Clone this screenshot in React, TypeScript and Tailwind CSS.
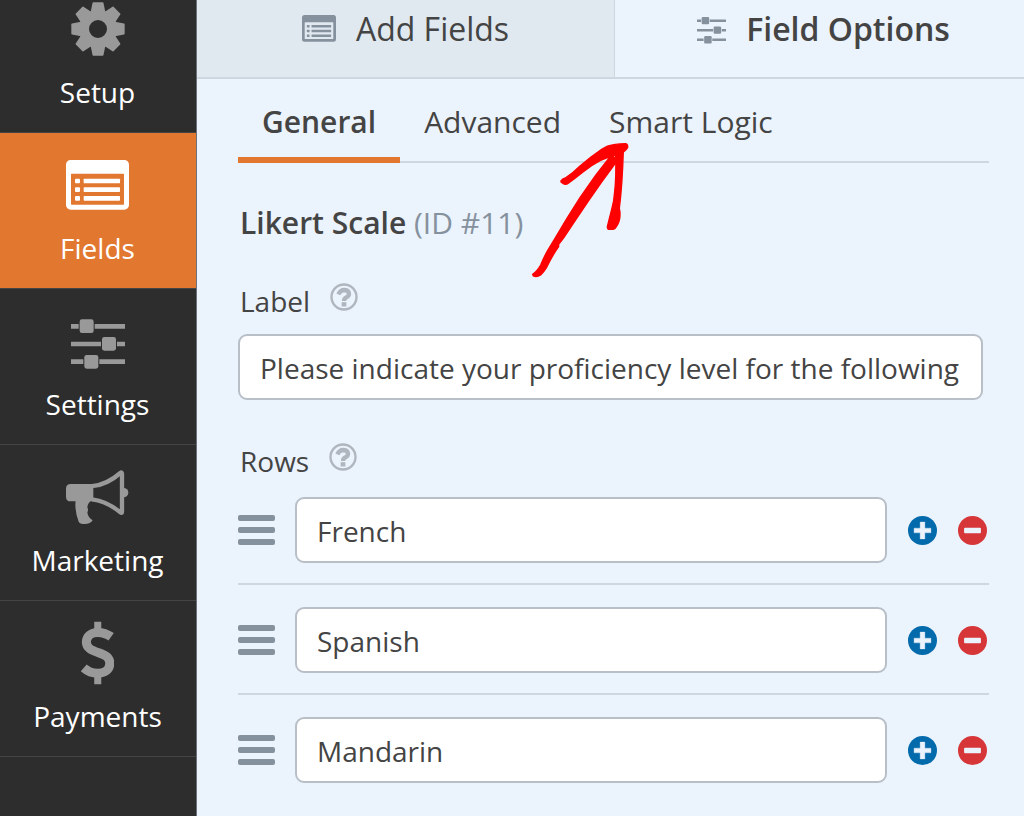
import React, { useState } from 'react';

type IconProps = { className?: string };

const GearIcon: React.FC<IconProps> = ({ className }) => (
  <svg viewBox="-81 -81 162 162" className={className} fill="currentColor" aria-hidden="true">
    <circle r="42" fill="none" stroke="currentColor" strokeWidth="30" />
    {[0, 45, 90, 135, 180, 225, 270, 315].map((deg) => (
      <path key={deg} d="M-14 -80H14Q16 -80 16.500 -78L22 -51H-22L-16.500 -78Q-16 -80 -14 -80Z" transform={`rotate(${deg})`} />
    ))}
  </svg>
);

const FormIcon: React.FC<IconProps> = ({ className }) => (
  <svg viewBox="0 0 189 149" className={className} fill="currentColor" aria-hidden="true">
    <path fillRule="evenodd" d="M14 0H175A14 14 0 0 1 189 14V135A14 14 0 0 1 175 149H14A14 14 0 0 1 0 135V14A14 14 0 0 1 14 0ZM17 41Q15 41 15 43V132Q15 134 17 134H172Q174 134 174 132V43Q174 41 172 41Z" />
    {[56, 82, 108].map((y) => (
      <g key={y}>
        <rect x="27" y={y} width="15" height="14" rx="3" />
        <rect x="53" y={y} width="109" height="14" rx="2" />
      </g>
    ))}
  </svg>
);

const SlidersIcon: React.FC<IconProps> = ({ className }) => (
  <svg viewBox="0 -22 162 172" className={className} fill="currentColor" aria-hidden="true">
    <path d="M0 14H23V28H0ZM71 14H162V28H71ZM0 67H90V81H0ZM138 67H162V81H138ZM0 120H37V134H0ZM85 120H162V134H85Z" />
    <rect x="26" y="0" width="42" height="41" rx="7" />
    <rect x="93" y="53" width="42" height="41" rx="7" />
    <rect x="40" y="107" width="42" height="41" rx="7" />
  </svg>
);

const MegaphoneIcon: React.FC<IconProps> = ({ className }) => (
  <svg viewBox="0 0 189 162" className={className} fill="currentColor" aria-hidden="true">
    <path d="M14 42H82V94H14Q0 94 0 80V56Q0 42 14 42Z" />
    <path d="M78 48.500Q122 45 163 9Q168 5 168 12V125Q168 131 163 127Q122 93 78 88" fill="none" stroke="currentColor" strokeWidth="13" strokeLinejoin="round" />
    <path d="M173 54A14 14 0 0 1 173 82Z" />
    <path d="M29 90H80Q65 97 64 112Q68 120 64 127Q66 143 80 151Q74 162 56 162Q41 162 38 155Q25 120 29 90Z" />
  </svg>
);

const DollarIcon: React.FC<IconProps> = ({ className }) => (
  <svg viewBox="0 0 100 191" className={className} fill="none" stroke="currentColor" strokeWidth="27" aria-hidden="true">
    <path d="M90 47Q72 34 50 34C30 34 16 46 16 63C16 101 86 87 86 126C86 146 70 156 49 156Q26 156 8 140" />
    <path d="M50 2V30M50 160V189" strokeWidth="21" strokeLinecap="butt" />
  </svg>
);

const HelpIcon: React.FC = () => (
  <svg viewBox="0 0 84 84" className="h-7 w-7" fill="none" stroke="#b0b6bd" aria-hidden="true">
    <circle cx="42" cy="42" r="37.500" strokeWidth="7" />
    <path d="M25 34Q31 21 43 21Q57 22 57 33Q57 39 49 43Q42 47 42 54" strokeWidth="13" />
    <path d="M35 64H49" strokeWidth="13" />
  </svg>
);

const ArrowMark: React.FC<IconProps> = ({ className }) => (
  <svg viewBox="0 0 390 480" className={className} fill="#ff0000" stroke="#ff0000" strokeWidth="4" strokeLinejoin="round" aria-hidden="true">
    <path d="M38 433Q50 425 62 405Q72 380 85 358L105 325Q140 265 180 203Q225 135 275 74L292 92Q245 155 205 213Q165 272 130 325L116 343V350Q97 376 80 412Q70 428 62 435Q50 443 40 438Z" />
    <path d="M287 78Q289 140 284 185Q282 215 275 238Q268 265 262 290Q262 298 268 298H280Q285 298 289 290Q299 276 300 258Q301 245 298 235Q307 165 310 62Z" />
    <path d="M123 152Q128 146 138 143Q160 128 180 108Q210 82 245 58Q262 46 280 44Q300 41 317 41Q324 43 323 52Q318 62 300 72Q265 80 240 92Q212 107 190 125Q165 145 142 162Q134 166 123 156Z" />
  </svg>
);

const navItems = [
  { label: 'Setup', icon: <GearIcon className="w-[54px]" /> },
  { label: 'Fields', icon: <FormIcon className="w-[63px]" /> },
  { label: 'Settings', icon: <SlidersIcon className="w-[54px]" /> },
  { label: 'Marketing', icon: <MegaphoneIcon className="w-[63px]" /> },
  { label: 'Payments', icon: <DollarIcon className="h-16" /> },
];

const subTabs = ['General', 'Advanced', 'Smart Logic'];

const inputClass = 'h-[66px] min-w-0 rounded-[9px] border-2 border-[#b9bfc7] bg-white px-5 pt-[2px] text-[28px] text-[#444] outline-none';

export default function App() {
  const [section, setSection] = useState('Fields');
  const [subTab, setSubTab] = useState('General');
  const [label, setLabel] = useState('Please indicate your proficiency level for the following');
  const [rows, setRows] = useState(['French', 'Spanish', 'Mandarin']);

  const addRow = (i: number) => setRows([...rows.slice(0, i + 1), '', ...rows.slice(i + 1)]);
  const removeRow = (i: number) => setRows(rows.filter((_, n) => n !== i));
  const editRow = (i: number, value: string) => setRows(rows.map((row, n) => (n === i ? value : row)));

  return (
    <div className="flex min-h-screen bg-[#ebf3fc] font-['Open_Sans','Noto_Sans',sans-serif] text-[#444]">
      {/* the first item is scrolled partly out of view */}
      <nav className="w-[197px] shrink-0 overflow-hidden border-r border-[#6d7278] bg-[#2d2d2d]">
        <div className="-mt-[23px]">
          {navItems.map(({ label: name, icon }) => (
            <button
              key={name}
              onClick={() => setSection(name)}
              className={`flex w-full flex-col items-center border-b border-[#444] pt-5 pr-px pb-5 ${section === name ? 'bg-[#e27730] text-white' : 'text-[#999]'}`}
            >
              <span className="flex h-16 items-center justify-center">{icon}</span>
              <span className="mt-[11px] text-[28px] leading-[40px] text-white">{name}</span>
            </button>
          ))}
        </div>
      </nav>

      <main className="relative min-w-0 flex-1">
        <div className="flex h-[79px] border-b-2 border-[#ced7e0]">
          <button className="flex w-[418px] shrink-0 items-center justify-center gap-5 border-r border-[#ced7e0] bg-[#e0e8f0] pb-[20px] text-[32px] whitespace-nowrap">
            <FormIcon className="w-[34px] text-[#86919e]" />
            Add Fields
          </button>
          <button className="flex flex-1 items-center justify-center gap-5 pb-[20px] pl-2 text-[32px] font-semibold whitespace-nowrap">
            <SlidersIcon className="w-[29px] text-[#86919e]" />
            Field Options
          </button>
        </div>

        <div className="pr-[35px] pl-[41px]">
          <div className="flex border-b-2 border-[#ced7e0] pt-[23px]">
            {subTabs.map((tab) => (
              <button
                key={tab}
                onClick={() => setSubTab(tab)}
                className={`-mb-[2px] border-b-[6px] px-6 pb-[15px] text-[30px] leading-[40px] whitespace-nowrap ${subTab === tab ? 'border-[#e27730] font-semibold' : 'border-transparent'}`}
              >
                {tab}
              </button>
            ))}
          </div>

          <h2 className="mt-10 pl-[2px] text-[30px] leading-[40px] font-semibold">
            Likert Scale <span className="font-normal text-[#86919e]">(ID #11)</span>
          </h2>

          <div className="mt-[38px] flex h-10 items-start gap-5 pl-[2px]">
            <label htmlFor="field-label" className="text-[28px] leading-[40px]">Label</label>
            <button aria-label="Label help" className="pt-[2px]"><HelpIcon /></button>
          </div>
          <div className="mt-[13px] flex pr-[6px]">
            <input id="field-label" value={label} onChange={(e) => setLabel(e.target.value)} className={`w-full ${inputClass}`} />
          </div>

          <div className="mt-[41px] flex h-10 items-start gap-5 pl-[2px]">
            <h3 className="text-[28px] leading-[40px]">Rows</h3>
            <button aria-label="Rows help" className="pt-[2px]"><HelpIcon /></button>
          </div>
          <ul className="mt-[16px]">
            {rows.map((row, i) => (
              <li key={i} className="mb-[22px] flex items-center border-b-2 border-[#ced7e0] pb-5 last:border-transparent">
                <button aria-label="Move row" className="mr-5 flex w-[37px] shrink-0 flex-col gap-[6px]">
                  <span className="h-[6px] w-full rounded-[2px] bg-[#86919e]" />
                  <span className="h-[6px] w-full rounded-[2px] bg-[#86919e]" />
                  <span className="h-[6px] w-full rounded-[2px] bg-[#86919e]" />
                </button>
                <input aria-label={`Row ${i + 1}`} value={row} onChange={(e) => editRow(i, e.target.value)} className={`flex-1 ${inputClass}`} />
                <button aria-label="Add row" onClick={() => addRow(i)} className="ml-[21px] shrink-0">
                  <svg viewBox="0 0 86 86" className="h-[29px] w-[29px]">
                    <circle cx="43" cy="43" r="43" fill="#036aab" />
                    <path d="M36 18H50V36H68V50H50V68H36V50H18V36H36Z" fill="#ebf3fc" stroke="#ebf3fc" strokeWidth="1" strokeLinejoin="round" />
                  </svg>
                </button>
                <button aria-label="Remove row" onClick={() => removeRow(i)} className="mr-[2px] ml-[21px] shrink-0">
                  <svg viewBox="0 0 86 86" className="h-[29px] w-[29px]">
                    <circle cx="43" cy="43" r="43" fill="#d63638" />
                    <rect x="18" y="35" width="50" height="16" rx="3" fill="#ebf3fc" />
                  </svg>
                </button>
              </li>
            ))}
          </ul>
        </div>

        {/* hand-drawn pointer to Smart Logic */}
        <ArrowMark className="pointer-events-none absolute top-[130px] left-[323px] h-[160px] w-[130px]" />
      </main>
    </div>
  );
}
